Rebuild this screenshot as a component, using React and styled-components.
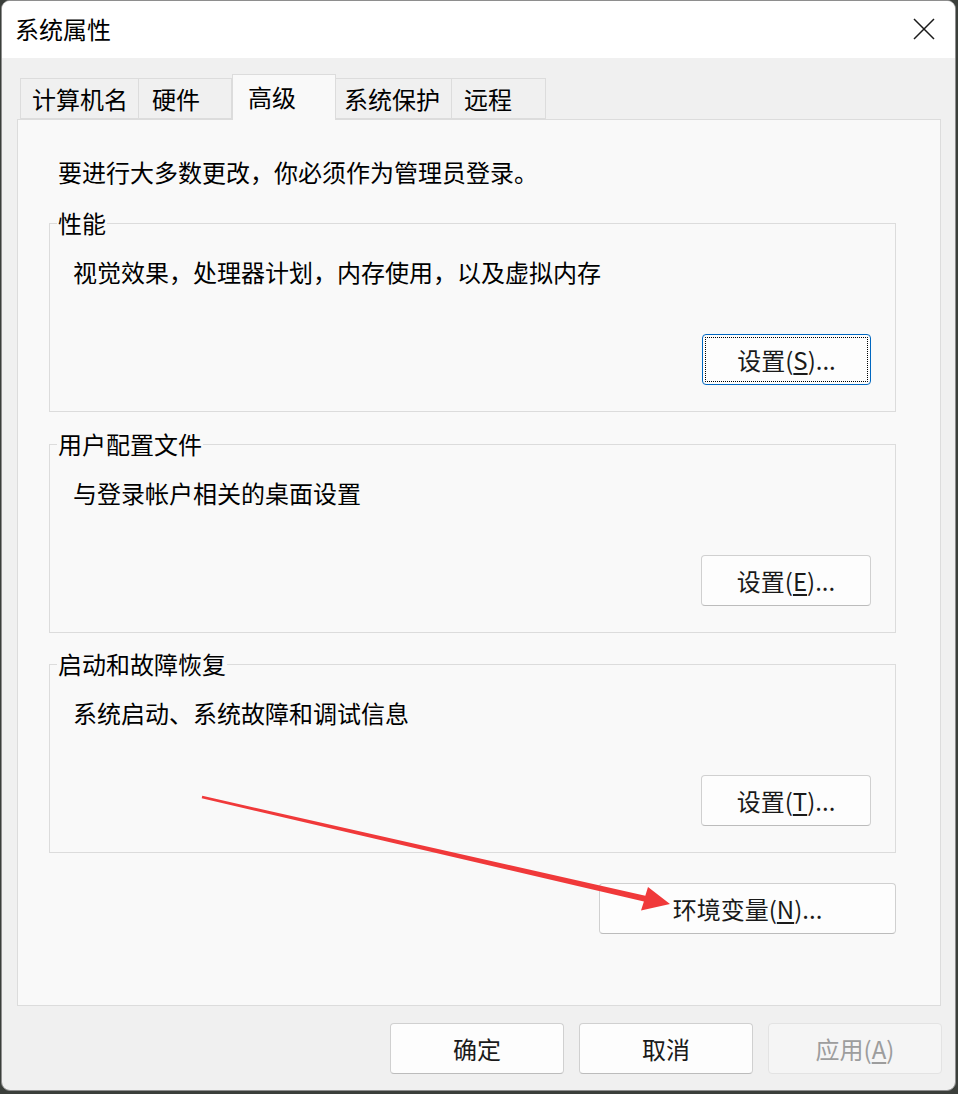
import React from "react"
import styled, { createGlobalStyle } from "styled-components"

const GlobalStyle = createGlobalStyle`
  html, body {
    margin: 0;
    padding: 0;
    background: #3b3f3b;
  }
  body {
    font-family: "Noto Sans CJK SC", "Noto Sans", "Liberation Sans", sans-serif;
    color: #000;
  }
`

const Window = styled.div`
  position: relative;
  box-sizing: border-box;
  width: 955px;
  height: 1091px;
  margin-left: 1px;
  border: 1px solid #8e8e8e;
  border-radius: 9px;
  overflow: hidden;
  background: #f0f0f0;
  display: flex;
  flex-direction: column;
`

const TitleBar = styled.div`
  height: 57px;
  flex: none;
  background: #fff;
  display: flex;
  align-items: center;
  justify-content: space-between;
  padding: 0 20px 0 13px;
`

const Title = styled.div`
  font-size: 24px;
  line-height: 32px;
  margin-top: -1px;
`

const CloseButton = styled.div`
  width: 22px;
  height: 22px;
  display: flex;
  align-items: center;
  justify-content: center;
  margin-top: -1px;
`

const Body = styled.div`
  flex: 1;
  padding: 16px 14px 0 15px;
  display: flex;
  flex-direction: column;
`

const TabRow = styled.div`
  display: flex;
  align-items: flex-end;
  margin-left: 3px;
  position: relative;
  z-index: 1;
`

const Tab = styled.div`
  box-sizing: border-box;
  width: ${p => p.$w}px;
  height: ${p => (p.$active ? 46 : 41)}px;
  margin-bottom: ${p => (p.$active ? -1 : 0)}px;
  padding-left: ${p => p.$pl}px;
  border: 1px solid #dcdcdc;
  border-bottom: ${p => (p.$active ? "none" : "1px solid #dcdcdc")};
  border-left: ${p => (p.$first || p.$active ? "1px solid #dcdcdc" : "none")};
  background: ${p => (p.$active ? "#f9f9f9" : "#f0f0f0")};
  font-size: 24px;
  line-height: ${p => (p.$active ? 44 : 40)}px;
  white-space: nowrap;
`

const Panel = styled.div`
  box-sizing: border-box;
  height: 887px;
  border: 1px solid #dcdcdc;
  background: #f9f9f9;
  padding: 36px 44px 0 31px;
  display: flex;
  flex-direction: column;
`

const Intro = styled.div`
  font-size: 24px;
  line-height: 32px;
  padding-left: 9px;
`

const Group = styled.fieldset`
  margin: ${p => p.$mt}px 0 0 0;
  padding: 17px 24px 26px 23px;
  border: 1px solid #dcdcdc;
  min-width: 0;
`

const Legend = styled.legend`
  margin-left: -16px;
  padding: 0 1px;
  font-size: 24px;
  line-height: 32px;
`

const Desc = styled.div`
  font-size: 24px;
  line-height: 32px;
`

const ButtonRow = styled.div`
  display: flex;
  justify-content: flex-end;
  margin-top: ${p => p.$mt || 0}px;
`

const Button = styled.div`
  box-sizing: border-box;
  width: ${p => p.$w}px;
  height: 51px;
  display: flex;
  align-items: center;
  justify-content: center;
  border: 1px solid ${p => (p.$focus ? "#0067c0" : p.$disabled ? "#e3e3e3" : "#d0d0d0")};
  border-bottom-color: ${p => (p.$focus ? "#0067c0" : p.$disabled ? "#e3e3e3" : "#bcbcbc")};
  border-radius: 4px;
  background: ${p => (p.$disabled ? "#f5f5f5" : "#fdfdfd")};
  color: ${p => (p.$disabled ? "#9d9d9d" : "#1a1a1a")};
  font-size: 24px;
  line-height: 32px;
  outline: ${p => (p.$focus ? "1px dotted #000" : "none")};
  outline-offset: -4px;
`

const Key = styled.span`
  text-decoration: underline;
  text-underline-offset: 3px;
`

const Footer = styled.div`
  display: flex;
  justify-content: flex-end;
  gap: 15px;
  padding-top: 17px;
  margin-right: -1px;
`

const Arrow = styled.svg`
  position: absolute;
  left: -2px;
  top: -1px;
  width: 958px;
  height: 1094px;
  pointer-events: none;
  z-index: 2;
`

function Btn({ label, k, ...rest }) {
  return (
    <Button {...rest}>
      {label}
      {k && (
        <>
          (<Key>{k}</Key>)...
        </>
      )}
    </Button>
  )
}

export default function App() {
  return (
    <>
      <GlobalStyle />
      <Window>
        <TitleBar>
          <Title>系统属性</Title>
          <CloseButton>
            <svg width="22" height="22" viewBox="0 0 22 22">
              <path d="M1 1 L21 21 M21 1 L1 21" stroke="#1a1a1a" strokeWidth="1.5" />
            </svg>
          </CloseButton>
        </TitleBar>
        <Body>
          <TabRow>
            <Tab $first $w={119} $pl={11}>计算机名</Tab>
            <Tab $w={93} $pl={13}>硬件</Tab>
            <Tab $active $w={104} $pl={15}>高级</Tab>
            <Tab $w={116} $pl={8}>系统保护</Tab>
            <Tab $w={94} $pl={12}>远程</Tab>
          </TabRow>
          <Panel>
            <Intro>要进行大多数更改，你必须作为管理员登录。</Intro>
            <Group $mt={19}>
              <Legend>性能</Legend>
              <Desc>视觉效果，处理器计划，内存使用，以及虚拟内存</Desc>
              <ButtonRow $mt={46}>
                <Btn $w={169} $focus label="设置" k="S" />
              </ButtonRow>
            </Group>
            <Group $mt={16}>
              <Legend>用户配置文件</Legend>
              <Desc>与登录帐户相关的桌面设置</Desc>
              <ButtonRow $mt={46}>
                <Btn $w={170} label="设置" k="E" />
              </ButtonRow>
            </Group>
            <Group $mt={15}>
              <Legend>启动和故障恢复</Legend>
              <Desc>系统启动、系统故障和调试信息</Desc>
              <ButtonRow $mt={46}>
                <Btn $w={170} label="设置" k="T" />
              </ButtonRow>
            </Group>
            <ButtonRow $mt={30}>
              <Btn $w={297} label="环境变量" k="N" />
            </ButtonRow>
          </Panel>
          <Footer>
            <Btn $w={174} label="确定" />
            <Btn $w={174} label="取消" />
            <Btn $w={174} $disabled label={<>应用(<Key>A</Key>)</>} />
          </Footer>
        </Body>
        <Arrow viewBox="0 0 958 1094">
          <polygon
            points="202.3,795.8 645.3,895.7 648,887 670,904 641,910.5 643.9,901.5 201.7,798.2"
            fill="#f0393a"
          />
        </Arrow>
      </Window>
    </>
  )
}
